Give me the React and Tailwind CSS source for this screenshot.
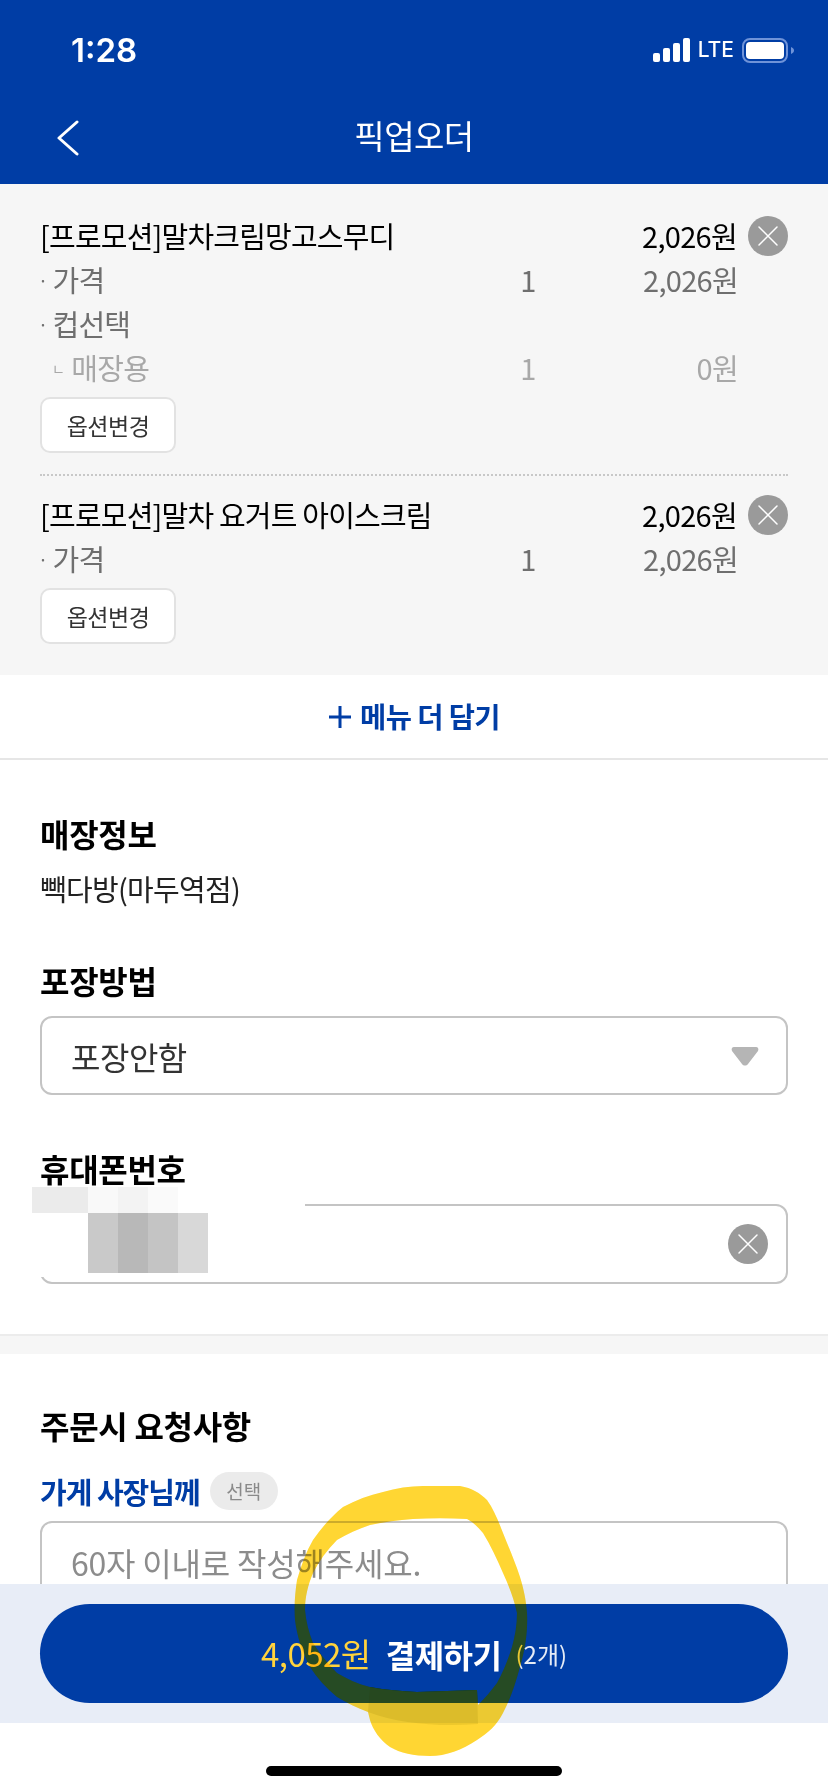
const FONT = "font-['Noto_Sans_CJK_KR','Noto_Sans',sans-serif]";

const SCRIBBLE =
  "M460 1486C472 1488 480 1493 487 1500C494 1510 498 1520 503 1533C509 1548 515 1562 520 1577C524 1590 526 1600 527 1613C528 1632 525 1650 520 1667C515 1685 510 1700 503 1713C497 1725 488 1733 477 1740C462 1750 446 1756 430 1756C414 1756 400 1753 390 1747C380 1740 373 1730 370 1720L368 1712C357 1708 347 1703 337 1697C326 1688 317 1678 310 1667C302 1652 297 1636 295 1620C294 1606 295 1593 297 1580C301 1566 306 1552 313 1540C322 1527 332 1516 343 1507C356 1500 369 1495 383 1492C396 1488 410 1486 423 1486Z M467 1519C449 1518 431 1518 413 1519C398 1520 384 1522 370 1525C358 1529 347 1534 337 1540C327 1550 319 1561 313 1573C308 1585 305 1597 305 1610C306 1622 309 1633 313 1643C320 1654 328 1664 337 1673C347 1679 358 1684 370 1687C386 1690 401 1691 417 1692L477 1690L478 1705C485 1698 491 1691 497 1683C503 1672 508 1660 512 1647C515 1636 517 1625 517 1613C514 1599 509 1586 503 1573C497 1559 491 1546 483 1533C478 1527 473 1522 467 1519Z";

function CloseDot({ className = "" }) {
  return (
    <span className={`flex h-10 w-10 shrink-0 items-center justify-center rounded-full bg-[#9a9a9a] ${className}`}>
      <svg width="22" height="22" viewBox="0 0 22 22" fill="none" stroke="#fff" strokeWidth="1.5" strokeLinecap="round">
        <path d="M2 2 20 20M20 2 2 20" />
      </svg>
    </span>
  );
}

function Row({ label, qty, price, tone = "text-[#6f6f6f]", indent = false }) {
  return (
    <div className={`flex h-11 items-center text-[29px] tracking-[-0.7px] ${tone}`}>
      <span className={`flex flex-1 items-center ${indent ? "pl-3" : ""}`}>
        <span className={indent ? "mr-[7px] text-[14px]" : "mr-[5px] -ml-0.5 text-[18px]"}>{indent ? "ㄴ" : "·"}</span>
        {label}
      </span>
      <span className="w-8 text-center">{qty}</span>
      <span className="w-[244px] pr-[50px] text-right">{price}</span>
    </div>
  );
}

function OptionButton() {
  return (
    <button className="mt-[7px] flex h-[56px] w-[136px] items-center justify-center rounded-[10px] border-2 border-[#e2e2e2] bg-white text-[23px] tracking-[-0.5px] text-[#333]">
      옵션변경
    </button>
  );
}

function Item({ name, children }) {
  return (
    <div>
      <div className="flex h-11 items-center justify-between">
        <span className="text-[29px] tracking-[-0.8px] text-black">{name}</span>
        <span className="flex items-center gap-[11px] text-[29px] tracking-[-0.7px] text-black">
          2,026원
          <CloseDot />
        </span>
      </div>
      {children}
      <OptionButton />
    </div>
  );
}

function Heading({ children, className = "" }) {
  return <h2 className={`text-[32px] font-bold leading-[44px] tracking-[-0.3px] text-black ${className}`}>{children}</h2>;
}

export default function App() {
  return (
    <div className={`${FONT} relative flex h-[1792px] w-[828px] flex-col overflow-hidden bg-white`}>
      <header className="relative h-[184px] shrink-0 bg-[#003da5] text-white">
        <div className="flex h-[100px] items-start justify-between pl-[71px] pr-[34px] pt-[30px]">
          <span className="font-['Inter',sans-serif] text-[33px] font-semibold leading-[40px]">1:28</span>
          <div className="mt-[7px] flex items-center gap-2">
            <svg width="37" height="24" viewBox="0 0 37 24" fill="#fff">
              <rect x="0" y="15" width="7" height="9" rx="2" />
              <rect x="10" y="10" width="7" height="14" rx="2" />
              <rect x="20" y="5" width="7" height="19" rx="2" />
              <rect x="30" y="0" width="7" height="24" rx="2" />
            </svg>
            <span className="font-['Inter',sans-serif] text-[21px] font-medium leading-[26px]">LTE</span>
            <svg width="52" height="25" viewBox="0 0 52 25" fill="none">
              <rect x="1" y="1" width="44" height="23" rx="7" stroke="#6f93d8" strokeWidth="2" />
              <rect x="4" y="4" width="38" height="17" rx="4" fill="#fff" />
              <path d="M49 9c2 1 3 2 3 3.500s-1 2.500-3 3.500z" fill="#6f93d8" />
            </svg>
          </div>
        </div>
        <div className="relative flex h-[84px] items-start justify-center pt-[12px]">
          <svg className="absolute left-[56px] top-[20px]" width="24" height="36" viewBox="0 0 24 36" fill="none" stroke="#fff" strokeWidth="3" strokeLinecap="round" strokeLinejoin="round">
            <path d="M21 2 3 18 21 34" />
          </svg>
          <span className="text-[33px] leading-[46px] tracking-[-0.5px]">픽업오더</span>
        </div>
      </header>

      <main className="min-h-0 flex-1 overflow-hidden">
        <section className="bg-[#f6f6f6] pl-10 pr-10 pt-[30px] pb-[31px]">
          <Item name="[프로모션]말차크림망고스무디">
            <Row label="가격" qty="1" price="2,026원" />
            <Row label="컵선택" />
            <Row label="매장용" qty="1" price="0원" indent tone="text-[#a8a8a8]" />
          </Item>
          <div className="mb-[17px] mt-[21px] border-t-2 border-dotted border-[#c8c8c8]" />
          <Item name="[프로모션]말차 요거트 아이스크림">
            <Row label="가격" qty="1" price="2,026원" />
          </Item>
        </section>

        <button className="flex h-[85px] w-full items-center justify-center gap-2 border-b-2 border-[#e6e6e6] text-[28.500px] font-bold tracking-[-0.6px] text-[#003da5]">
          <svg width="24" height="24" viewBox="0 0 24 24" stroke="#003da5" strokeWidth="3">
            <path d="M12 1v22M1 12h22" />
          </svg>
          메뉴 더 담기
        </button>

        <section className="px-10 pb-[50px] pt-[51px]">
          <Heading>매장정보</Heading>
          <p className="mt-[13px] text-[29px] leading-[40px] tracking-[-0.7px] text-[#222]">빽다방(마두역점)</p>

          <Heading className="mt-[50px]">포장방법</Heading>
          <div className="mt-[14px] flex h-[79px] items-center justify-between rounded-[12px] border-2 border-[#c4c4c4] pl-[29px] pr-[27px] text-[32px] tracking-[-0.5px] text-[#333]">
            포장안함
            <svg width="28" height="20" viewBox="0 0 28 20" fill="#b5b5b5">
              <path d="M3 1h22c2 0 3 2 2 4L17 18c-1.500 2-4.500 2-6 0L1 5C0 3 1 1 3 1z" />
            </svg>
          </div>

          <Heading className="mt-[51px]">휴대폰번호</Heading>
          <div className="relative mt-[14px] flex h-[80px] items-center justify-end rounded-[12px] border-2 border-[#c4c4c4] pr-[18px]">
            <CloseDot />
            <div className="absolute -left-[10px] -top-[19px] h-[90px] w-[273px] bg-white">
              <div className="flex h-[26px]">
                <i className="w-[56px] bg-[#ebebeb]" />
                <i className="w-[30px] bg-[#f9f9f9]" />
                <i className="w-[30px] bg-[#f3f3f3]" />
                <i className="w-[30px] bg-[#fafafa]" />
              </div>
              <div className="ml-[56px] flex h-[60px]">
                <i className="w-[30px] bg-[#c9c9c9]" />
                <i className="w-[30px] bg-[#b8b8b8]" />
                <i className="w-[30px] bg-[#c4c4c4]" />
                <i className="w-[30px] bg-[#d8d8d8]" />
              </div>
            </div>
          </div>
        </section>

        <div className="h-[20px] border-t-2 border-[#ececec] bg-[#f6f6f6]" />

        <section className="px-10 pt-[49px]">
          <Heading>주문시 요청사항</Heading>
          <div className="mt-[25px] flex items-center gap-[10px]">
            <span className="text-[29px] font-bold leading-[38px] tracking-[-1px] text-[#003da5]">가게 사장님께</span>
            <span className="flex h-[38px] w-[68px] items-center justify-center rounded-[19px] bg-[#ebebeb] text-[19px] text-[#8a8a8a]">선택</span>
          </div>
          <div className="mt-[11px] h-[160px] rounded-[12px] border-2 border-[#c4c4c4] pl-[29px] pt-[18px] text-[32px] leading-[42px] tracking-[-0.2px] text-[#8c8c8c]">
            60자 이내로 작성해주세요.
          </div>
        </section>
      </main>

      <footer className="h-[139px] shrink-0 bg-[#e8edf7] px-10 pt-5">
        <button className="flex h-[99px] w-full items-center justify-center rounded-[50px] bg-[#003da5]">
          <span className="text-[33px] tracking-[-0.5px] text-[#ffd33d]">4,052원</span>
          <span className="ml-[15px] text-[32px] font-bold tracking-[-0.5px] text-white">결제하기</span>
          <span className="ml-[14px] text-[24px] text-white/90">(2개)</span>
        </button>
      </footer>

      <div className="flex h-[69px] shrink-0 items-start justify-center pt-[43px]">
        <div className="h-[10px] w-[296px] rounded-full bg-black" />
      </div>

      <svg className="pointer-events-none absolute left-0 top-0 mix-blend-multiply" width="828" height="1792" viewBox="0 0 828 1792">
        <path fillRule="evenodd" fill="#ffd633" d={SCRIBBLE} />
        <path fill="#ecc62a" d="M370 1687C386 1690 401 1691 417 1692L477 1690L478 1724C440 1727 400 1724 368 1712Z" />
      </svg>
      <svg className="pointer-events-none absolute left-0 top-0" width="828" height="1792" viewBox="0 0 828 1792">
        <path fillRule="evenodd" fill="#ffd633" fillOpacity="0.15" d={SCRIBBLE} />
      </svg>
    </div>
  );
}
